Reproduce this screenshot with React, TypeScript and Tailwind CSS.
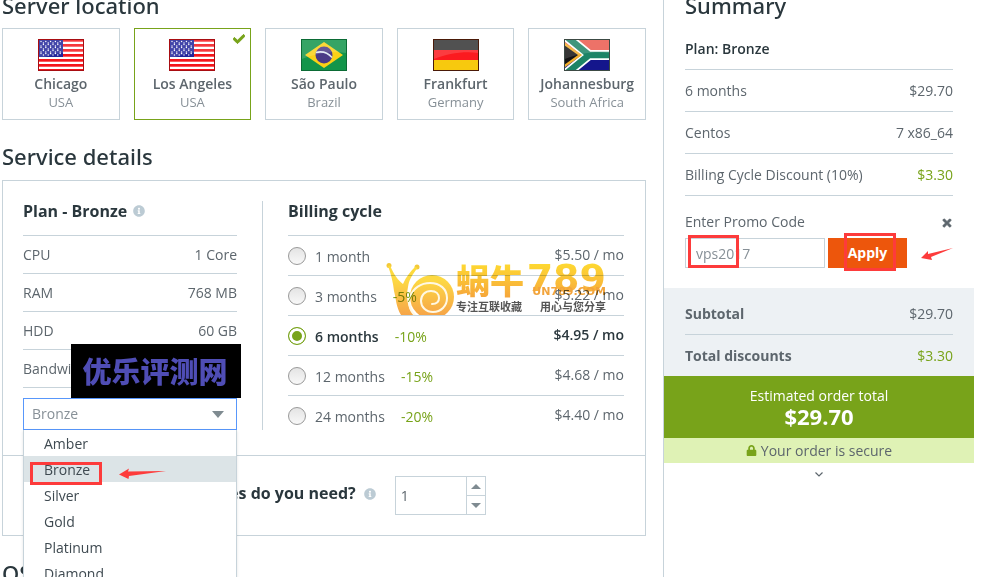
import { useState } from "react";
import { FaCheck, FaInfoCircle, FaLock, FaTimes } from "react-icons/fa";
import clsx from "clsx";

const specs = [
  ["CPU", "1 Core"],
  ["RAM", "768 MB"],
  ["HDD", "60 GB"],
  ["Bandwidth", "1 TB"],
];

const plans = ["Amber", "Bronze", "Silver", "Gold", "Platinum", "Diamond"];

const cycles = [
  { id: "1", label: "1 month", discount: "", price: "$5.50 / mo" },
  { id: "3", label: "3 months", discount: "-5%", price: "$5.22 / mo" },
  { id: "6", label: "6 months", discount: "-10%", price: "$4.95 / mo" },
  { id: "12", label: "12 months", discount: "-15%", price: "$4.68 / mo" },
  { id: "24", label: "24 months", discount: "-20%", price: "$4.40 / mo" },
];

const stars = Array.from({ length: 45 }, (_, i) => ({
  x: 3 + (i % 9) * 2.4,
  y: 2.5 + Math.floor(i / 9) * 3 + (i % 2) * 1.5,
}));

function FlagFrame({ children, stroke }) {
  return (
    <svg viewBox="0 0 46 32" className="mx-auto block h-8 w-[46px]" aria-hidden="true">
      {children}
      <path d="M1 1h44v13C30 12 14 15 1 20z" fill="#fff" opacity=".15" />
      <rect x=".5" y=".5" width="45" height="31" fill="none" stroke={stroke} />
    </svg>
  );
}

function UsaFlag() {
  return (
    <FlagFrame stroke="#a80d12">
      <rect width="46" height="32" fill="#fff" />
      {[0, 5, 10, 15, 20, 25, 30].map((y) => (
        <rect key={y} y={y} width="46" height="2.7" fill="#f5161b" />
      ))}
      <rect width="25" height="18" fill="#22259a" />
      {stars.map((s, i) => (
        <circle key={i} cx={s.x} cy={s.y} r=".7" fill="#fff" />
      ))}
      <path d="M.5 0v18" stroke="#12146e" />
    </FlagFrame>
  );
}

function BrazilFlag() {
  return (
    <FlagFrame stroke="#0b6b35">
      <rect width="46" height="32" fill="#12954a" />
      <path d="M4 16 23 3l19 13-19 13z" fill="#fbd116" />
      <circle cx="23" cy="16" r="8.500" fill="#4a3a86" />
      <path d="M15 13.500c6-1.500 12 .5 16 5" fill="none" stroke="#dfe8f2" strokeWidth="1.600" />
    </FlagFrame>
  );
}

function GermanyFlag() {
  return (
    <FlagFrame stroke="#4a1a08">
      <rect width="46" height="11" fill="#333" />
      <rect y="11" width="46" height="10" fill="#fb1a1f" />
      <rect y="21" width="46" height="11" fill="#f7c90e" />
    </FlagFrame>
  );
}

function SouthAfricaFlag() {
  return (
    <FlagFrame stroke="#3c4a44">
      <rect width="46" height="16" fill="#ea5a4e" />
      <rect y="16" width="46" height="16" fill="#14168c" />
      <path d="M3-2 25 16 3 34M24 16h24" fill="none" stroke="#fff" strokeWidth="10" />
      <path d="M3-2 25 16 3 34M24 16h24" fill="none" stroke="#1d8466" strokeWidth="6.500" />
      <path d="M0 3 18 16 0 29z" fill="#f2b02c" />
      <path d="M0 6 14 16 0 26z" fill="#141414" />
    </FlagFrame>
  );
}

const locations = [
  { city: "Chicago", country: "USA", Flag: UsaFlag },
  { city: "Los Angeles", country: "USA", Flag: UsaFlag },
  { city: "São Paulo", country: "Brazil", Flag: BrazilFlag },
  { city: "Frankfurt", country: "Germany", Flag: GermanyFlag },
  { city: "Johannesburg", country: "South Africa", Flag: SouthAfricaFlag },
];

function Arrow({ className, d }) {
  return (
    <svg viewBox="0 0 48 16" className={clsx("pointer-events-none absolute h-4 w-12", className)} aria-hidden="true">
      <path d={d} fill="#fd3b3b" />
    </svg>
  );
}

function SnailLogo() {
  return (
    <div className="pointer-events-none absolute top-[26px] left-[98px] flex w-[220px] mix-blend-multiply">
      <svg viewBox="0 0 68 53" className="h-[53px] w-[68px] shrink-0" aria-hidden="true">
        <defs>
          <linearGradient id="snail" gradientUnits="userSpaceOnUse" x1="0" y1="4" x2="0" y2="53">
            <stop offset="0" stopColor="#fddb3a" />
            <stop offset=".3" stopColor="#fdd843" />
            <stop offset="1" stopColor="#f6a548" />
          </linearGradient>
        </defs>
        <circle cx="3" cy="3.500" r="2.500" fill="#f3c93a" />
        <circle cx="31" cy="5" r="2.500" fill="#f3c93a" />
        <path
          d="M2 4 4 3.500C8 13 12 18 17 22c3-7 7-12 12.500-17.500L31.500 6C26 13 23 18 22 25c-2 10-1 20 6 28H15C10 45 10 36 8 29 7 20 5 12 2 4z"
          fill="url(#snail)"
        />
        <circle cx="46" cy="35" r="22" fill="url(#snail)" />
        <path
          d="M31 55c-7-5-9-12-7-20 3-9 11-14 20-14 10 0 17 6 17 15 0 8-6 14-14 14-7 0-12-5-12-11 0-6 4-10 10-10 5 0 8 3 8 7 0 4-3 6-7 6"
          fill="none"
          stroke="#fff8e4"
          strokeWidth="2"
          strokeLinecap="round"
        />
      </svg>
      <div className="relative ml-0.5 flex-1">
        <div className="flex h-[38px] justify-between bg-linear-to-b from-[#fedb30] to-[#f5a23b] bg-clip-text text-transparent">
          <span className="font-['Noto_Sans_CJK_SC',sans-serif] text-[34px] leading-9 font-black">蜗牛</span>
          <span className="font-['DejaVu_Sans',sans-serif] text-[38px] leading-8 font-bold">789</span>
        </div>
        <span className="absolute top-6 right-0 font-['DejaVu_Sans',sans-serif] text-[11px] leading-3 font-bold text-[#f2a43c]">
          UN789.COM
        </span>
        <div className="flex justify-between font-['Noto_Sans_CJK_SC',sans-serif] text-[11px] leading-3 font-bold whitespace-nowrap text-[#555]">
          <span>专注互联收藏</span>
          <span>用心与您分享</span>
        </div>
      </div>
    </div>
  );
}

function SummaryRow({ label, value, className = "", valueClass = "" }) {
  return (
    <div className={clsx("box-content flex h-[41px] items-center justify-between", className)}>
      <span>{label}</span>
      <span className={clsx("font-normal", valueClass)}>{value}</span>
    </div>
  );
}

export default function App() {
  const [location, setLocation] = useState("Los Angeles");
  const [plan, setPlan] = useState("Bronze");
  const [cycle, setCycle] = useState("6");
  const [quantity, setQuantity] = useState(1);
  const [promo, setPromo] = useState("vps2017");

  return (
    <div className="flex h-screen overflow-hidden bg-white font-['Open_Sans','Noto_Sans',sans-serif] text-sm text-[#5d666d]">
      <main className="min-w-0 flex-1 pr-[17px] pl-0.5">
        <h2 className="mb-[18px] font-['Noto_Sans',sans-serif] text-[22px] leading-2.5 font-medium text-[#2a373d]">
          Server location
        </h2>
        <div className="grid grid-cols-5 gap-3.5">
          {locations.map(({ city, country, Flag }) => (
            <button
              key={city}
              type="button"
              onClick={() => setLocation(city)}
              className={clsx(
                "relative border pt-2.5 pb-2 text-center",
                city === location ? "border-[#78a31a]" : "border-[#c7d3da]"
              )}
            >
              <Flag />
              <span className="mt-1 block leading-[18px] font-semibold whitespace-nowrap">{city}</span>
              <span className="block text-[13px] leading-[18px] text-[#879097]">{country}</span>
              {city === location && (
                <FaCheck className="absolute top-1 right-[5px] size-3 text-[#78a31a]" stroke="currentColor" strokeWidth="40" />
              )}
            </button>
          ))}
        </div>

        <h2 className="mt-[25px] mb-[13px] font-['Noto_Sans',sans-serif] text-[22px] leading-[22px] font-medium text-[#2a373d]">
          Service details
        </h2>
        <div className="border border-[#c7d3da]">
          <div className="flex pt-5 pr-[21px] pb-[25px] pl-5">
            {/* Plan */}
            <section className="relative w-[214px] shrink-0">
              <h3 className="flex items-center gap-1.5 border-b border-[#c7d3da] pb-3.5 text-base leading-5 font-bold text-[#2a373d]">
                Plan - Bronze
                <FaInfoCircle className="size-3 text-[#bccbd4]" />
              </h3>
              {specs.map(([name, value]) => (
                <div key={name} className="flex h-[38px] items-center justify-between border-b border-[#c7d3da]">
                  <span>{name}</span>
                  <span>{value}</span>
                </div>
              ))}
              <div className="absolute top-[143px] left-12 flex h-[54px] w-[170px] items-center justify-center bg-black pr-0.5 font-['Noto_Sans_CJK_SC',sans-serif] text-[29px] font-black text-[#4f4db5]">
                优乐评测网
              </div>
              <div className="relative mt-2.5">
                <select
                  aria-label="Plan"
                  value={plan}
                  onChange={(e) => setPlan(e.target.value)}
                  className="block h-8 w-full appearance-none border border-[#5897fb] bg-white px-2 text-[#879097] outline-none"
                >
                  {plans.map((p) => (
                    <option key={p}>{p}</option>
                  ))}
                </select>
                <svg viewBox="0 0 12 7" className="pointer-events-none absolute top-[13px] right-[13px] h-[7px] w-3" aria-hidden="true">
                  <path d="M0 0h12L6 7z" fill="#7f8b91" />
                </svg>
                <ul className="absolute top-full left-0 z-10 w-full border border-t-0 border-[#c7d3da] bg-white text-[#3f4a51] shadow">
                  {plans.map((p) => (
                    <li
                      key={p}
                      onClick={() => setPlan(p)}
                      className={clsx("pt-0.5 pl-5 leading-6", p === plan && "bg-[#dce4e7]")}
                    >
                      {p}
                    </li>
                  ))}
                </ul>
                <div className="pointer-events-none absolute top-16 left-[7px] z-20 h-[23px] w-[72px] border-3 border-[#fd3b3b]" />
                <Arrow className="top-[68px] left-24 z-20" d="M0 8.500 10 2.500 9 5.500 47 5 10 10l-.5 3z" />
              </div>
            </section>

            {/* Billing cycle */}
            <section className="ml-[25px] flex-1 border-l border-[#c7d3da] pl-[25px]">
              <h3 className="border-b border-[#c7d3da] pb-3.5 text-base leading-5 font-bold text-[#2a373d]">
                Billing cycle
              </h3>
              <div className="relative">
                {cycles.map((c) => (
                  <label
                    key={c.id}
                    className={clsx(
                      "flex items-start border-b border-[#c7d3da] pt-[11px] pb-2 last-of-type:border-0 last-of-type:pb-[3px]",
                      c.id === cycle && "font-semibold text-[#2a373d]"
                    )}
                  >
                    <input
                      type="radio"
                      name="cycle"
                      checked={c.id === cycle}
                      onChange={() => setCycle(c.id)}
                      className="mr-[9px] size-[18px] appearance-none rounded-full border border-[#999] bg-linear-to-b from-[#e4e4e4] to-[#f8f8f8] checked:border-[#78a31a] checked:bg-[#78a31a] checked:from-[#78a31a] checked:to-[#78a31a] checked:shadow-[inset_0_0_0_3px_#fff]"
                    />
                    <span className="leading-5">{c.label}</span>
                    <span className="ml-4 leading-5 font-normal text-[#78a31a]">{c.discount}</span>
                    <span className="ml-auto leading-4">{c.price}</span>
                  </label>
                ))}
                <SnailLogo />
              </div>
            </section>
          </div>

          <div className="flex border-t border-[#c7d3da] p-5">
            <label htmlFor="quantity" className="pt-[7px] text-base leading-5 font-bold text-[#2a373d]">
              How many virtual machines do you need?
            </label>
            <FaInfoCircle className="mt-3 ml-2 size-3 text-[#bccbd4]" />
            <div className="ml-[19px] flex h-[39px] w-[91px] border border-[#c7d3da]">
              <input
                id="quantity"
                value={quantity}
                onChange={(e) => setQuantity(Number(e.target.value) || 1)}
                className="w-0 flex-1 px-[5px] outline-none"
              />
              <div className="flex w-[19px] flex-col divide-y divide-[#c7d3da] border-l border-[#c7d3da]">
                <button
                  type="button"
                  aria-label="Increase"
                  onClick={() => setQuantity(quantity + 1)}
                  className="flex flex-1 items-center justify-center"
                >
                  <svg viewBox="0 0 10 5" className="h-[5px] w-2.5">
                    <path d="M5 0l5 5H0z" fill="#7f8b91" />
                  </svg>
                </button>
                <button
                  type="button"
                  aria-label="Decrease"
                  onClick={() => setQuantity(Math.max(1, quantity - 1))}
                  className="flex flex-1 items-center justify-center"
                >
                  <svg viewBox="0 0 10 5" className="h-[5px] w-2.5">
                    <path d="M0 0h10L5 5z" fill="#7f8b91" />
                  </svg>
                </button>
              </div>
            </div>
          </div>
        </div>

        <h2 className="mt-[25px] font-['Noto_Sans',sans-serif] text-[22px] leading-6 font-medium text-[#2a373d]">OS</h2>
      </main>

      <aside className="mr-[15px] w-[311px] shrink-0 border-l border-[#c7d3da]">
        <div className="px-[21px]">
          <h2 className="mb-[18px] font-['Noto_Sans',sans-serif] text-[22px] leading-2.5 font-medium text-[#2a373d]">
            Summary
          </h2>
          <SummaryRow label="Plan: Bronze" value="" className="border-b border-[#c7d3da] font-semibold text-[#2a373d]" />
          <SummaryRow label="6 months" value="$29.70" className="border-b border-[#c7d3da]" />
          <SummaryRow label="Centos" value="7 x86_64" className="border-b border-[#c7d3da]" />
          <SummaryRow
            label="Billing Cycle Discount (10%)"
            value="$3.30"
            className="border-b border-[#c7d3da]"
            valueClass="text-[#78a31a]"
          />
          <div className="mt-4 flex items-center justify-between">
            <label htmlFor="promo" className="leading-5">Enter Promo Code</label>
            <button type="button" aria-label="Remove promo code" className="pt-0.5">
              <FaTimes className="size-3" stroke="currentColor" strokeWidth="30" />
            </button>
          </div>
          <div className="relative mt-1.5 mb-5 flex gap-[3px]">
            <input
              id="promo"
              value={promo}
              onChange={(e) => setPromo(e.target.value)}
              className="h-[30px] w-[140px] border border-[#c7d3da] px-2.5 text-[#879097] outline-none"
            />
            <button type="button" className="h-[30px] w-[79px] bg-[#ed560c] font-bold text-white">
              Apply
            </button>
            <div className="pointer-events-none absolute -top-[3px] left-[3px] h-[33px] w-[51px] border-3 border-[#fd3b3b]" />
            <div className="pointer-events-none absolute -top-[5px] left-[159px] h-[38px] w-[52px] border-3 border-[#fd3b3b]" />
            <Arrow className="top-2 left-[236px]" d="M0 12 7 5v3L32 2 10 11l1 3z" />
          </div>
        </div>

        <div className="bg-[#edf1f4] px-[21px] pt-[5px]">
          <SummaryRow label="Subtotal" value="$29.70" className="border-b border-[#c7d3da] font-bold" />
          <SummaryRow label="Total discounts" value="$3.30" className="font-bold" valueClass="text-[#78a31a]" />
        </div>
        <div className="bg-[#78a31a] pt-2.5 pb-3 text-center text-white">
          <p className="leading-5">Estimated order total</p>
          <p className="text-[22px] leading-5 font-bold">$29.70</p>
        </div>
        <p className="flex items-center justify-center gap-1 bg-[#dff2b5] leading-[25px]">
          <FaLock className="size-[11px] text-[#78a31a]" />
          Your order is secure
        </p>
        <svg viewBox="0 0 8 5" className="mx-auto mt-[9px] h-[5px] w-2" aria-hidden="true">
          <path d="M.5.5 4 4 7.500.5" fill="none" stroke="#5d666d" strokeWidth="1.200" />
        </svg>
      </aside>
    </div>
  );
}
